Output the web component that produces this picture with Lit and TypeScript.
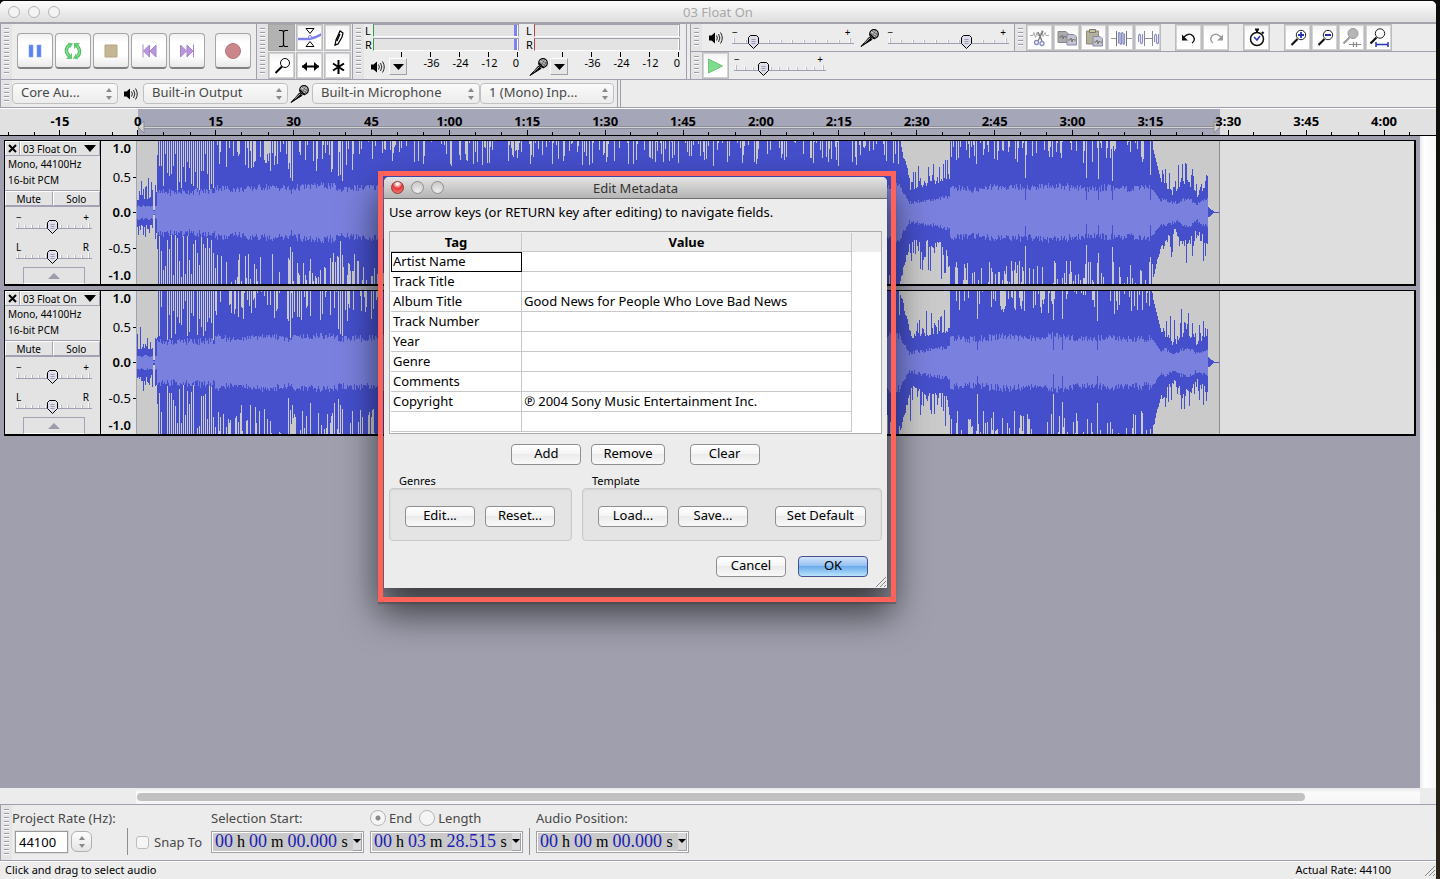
import { LitElement, html, svg, css, nothing } from "lit";
import { customElement, property } from "lit/decorators.js";

const SECONDS_TO_PX = 5.194;

/* ---------- icons ---------- */
const speaker = html`<svg width="14" height="14" viewBox="0 0 14 14" aria-hidden="true">
  <path d="M0 4.500h2.500L6 1.500v11L2.500 9.500H0z" fill="#000"/>
  <path d="M7.500 4.500q1.800 2.500 0 5M9.500 3q2.700 4 0 8M11.500 1.500q3.500 5.500 0 11" fill="none" stroke="#222"/></svg>`;
const mic = html`<svg width="20" height="20" viewBox="0 0 20 20" aria-hidden="true">
  <path d="M1 18.500L9.500 9l2.500 2.500z" fill="#000" stroke="#000"/><path d="M4.500 15l5.500-5" stroke="#bbb"/>
  <circle cx="14" cy="6" r="4.300" fill="#ccc" stroke="#000" stroke-width="1.200"/>
  <path d="M11 5l6 4M12 3l6 4M12 9l4-7M14.500 10l3-6" stroke="#555" stroke-width=".8"/>
  <path d="M10 6l5 5" stroke="#000" stroke-width="1.500"/></svg>`;
const upDown = html`<svg class="arrows" width="8" height="12" viewBox="0 0 8 12" aria-hidden="true"><path d="M4 0l3 4H1zM4 12l3-4H1z" fill="#8a8a8a"/></svg>`;
const grip = html`<span class="grip"></span>`;

const art: Record<string, unknown> = {
  pause: svg`<path d="M12 12h4v12h-4zM20 12h4v12h-4z" fill="#5b82ee" stroke="#86a3f4" stroke-width=".6"/>`,
  loop: svg`<path d="M15.500 11.500q-4.500 2-4 7 .5 3 3 5M20.500 24.500q4.500-2 4-7-.5-3-3-5" fill="none" stroke="#3fae52" stroke-width="3.400"/>
    <path d="M15.500 11.500q-4.500 2-4 7 .5 3 3 5M20.500 24.500q4.500-2 4-7-.5-3-3-5" fill="none" stroke="#7ee08c" stroke-width="1.800"/>
    <path d="M13 9.500l5 1-3 5zM23 26.500l-5-1 3-5zM11 26h6v-6zM25 10h-6v6z" fill="#62ca72"/>`,
  stop: svg`<path d="M12 12h12v12H12z" fill="#c4b594" stroke="#b5a582"/>`,
  prev: svg`<path d="M12 11.500v13M18.500 12v12l-6-6zM25 12v12l-6-6z" fill="#bb94dd" stroke="#a585c8"/>`,
  next: svg`<path d="M24.500 11.500v13M18 12v12l6-6zM11.500 12v12l6-6z" fill="#bb94dd" stroke="#a585c8"/>`,
  record: svg`<circle cx="18" cy="18" r="7.500" fill="#cb868b" stroke="#b5757b"/>`,
};
const tools: Record<string, unknown> = {
  Selection: svg`<path d="M10 5.500h3l1.500 1 1.500-1h3M14.500 6v15M10 21.500h3l1.500-1 1.500 1h3" fill="none" stroke="#000" stroke-width="1.200"/>`,
  Envelope: svg`<path d="M1 14h11q6-1 13-5" fill="none" stroke="#7d83e6" stroke-width="2.500"/><path d="M9 3.500h8l-4 5zM9 21.500h8l-4-5z" fill="#fff" stroke="#000"/><circle cx="13" cy="12" r="1.500" fill="#fff" stroke="#7d83e6"/>`,
  Draw: svg`<path d="M10 20l1-5 4-9 3 2-1 4-4 7zM15 9l-3 7" fill="#fff" stroke="#000" stroke-width="1.200"/><path d="M9.500 21l1-3 1.500 1.200z"/>`,
  Zoom: svg`<circle cx="16" cy="10" r="4.500" fill="#fff" stroke="#000"/><path d="M13 13.500l-6.500 6.500" stroke="#000" stroke-width="2"/>`,
  "Time Shift": svg`<path d="M5 13.500h17" stroke="#000" stroke-width="2"/><path d="M5 13.500l5-4.500v9zM22 13.500l-5-4.500v9z"/>`,
  Multi: svg`<path d="M13.500 7v14M8 10.500l11 7M19 10.500l-11 7" stroke="#000" stroke-width="2"/>`,
  Play: svg`<path d="M5.500 6v14l14-7z" fill="#7fdc8c" stroke="#6ec57b"/>`,
  Cut: svg`<path d="M3 10.500h3l1-3 1.500 5 1.500-5 1 3h2l2-5 1 6 2-4 1 3h3" fill="none" stroke="#aaa"/><path d="M11 16l5-10M15 16l-4-9" stroke="#777" stroke-width="1.300"/><circle cx="9.500" cy="17.500" r="2" fill="none" stroke="#8c8cc0" stroke-width="1.300"/><circle cx="15" cy="18.500" r="2" fill="none" stroke="#8c8cc0" stroke-width="1.300"/>`,
  Copy: svg`<path d="M4 6.500h8l2 2v9H4z" fill="#aaa" stroke="#888"/><path d="M5 12h2l1-2 1 4 1-3 1 1h3" fill="none" stroke="#777"/><path d="M13 9.500h7l2.500 2.500v8H13z" fill="#c4c4cf" stroke="#8888aa"/><path d="M14 15h2l1-2 1 4 1-3 1 1h2" fill="none" stroke="#777"/>`,
  Paste: svg`<path d="M5.500 6h12v13h-12z" fill="#b3b19c" stroke="#8d8b76"/><path d="M8.500 4.500h6v3h-6z" fill="#c8c594" stroke="#777"/><path d="M12 11.500h7l2.500 2.500v7H12z" fill="#c4c4cf" stroke="#8888aa"/><path d="M13 17h2l1-2 1 4 1-3 1 1h2" fill="none" stroke="#777"/>`,
  Trim: svg`<path d="M3 13.500h6M18 13.500h6" stroke="#999"/><path d="M8.500 6v15M18.500 6v15" stroke="#777"/><path d="M10.500 18.500v-10q1-2 1.500 0v10q1 2 1.500 0v-10q1-2 1.500 0v10q1 2 1.500 0v-10" fill="none" stroke="#8b8fc4" stroke-width="1.200"/>`,
  Silence: svg`<path d="M3.500 17v-6q1.500-4 2 0v6q1 4 2 0v-8M19.500 17v-6q1.500-4 2 0v6q1 4 2 0v-8" fill="none" stroke="#8b8fc4" stroke-width="1.200"/><path d="M9.500 6v15M17.500 6v15M10 13.500h7" stroke="#888"/>`,
  Undo: svg`<path d="M8 12q5-5 9-1 3 4-1 7" fill="none" stroke="#111" stroke-width="1.300"/><path d="M6 9.500v6h6z" fill="#111"/>`,
  Redo: svg`<path d="M18 12q-5-5-9-1-3 4 1 7" fill="none" stroke="#999" stroke-width="1.300"/><path d="M20 9.500v6h-6z" fill="#999"/>`,
  "Sync-Lock": svg`<circle cx="13" cy="14" r="6.500" fill="#fff" stroke="#111" stroke-width="1.500"/><path d="M11 4.500h4M13 4v4M18 7l1.500 1.500" stroke="#111" stroke-width="2"/><path d="M10 12l3 3 3-4" fill="none" stroke="#2b35b8" stroke-width="1.500"/>`,
  "Zoom In": svg`<circle cx="16" cy="10" r="4.700" fill="#fff" stroke="#222"/><path d="M12.500 14l-6 6" stroke="#111" stroke-width="2.200"/><path d="M13 10h6M16 7v6" stroke="#2633b5" stroke-width="1.800"/>`,
  "Zoom Out": svg`<circle cx="16" cy="10" r="4.700" fill="#fff" stroke="#222"/><path d="M12.500 14l-6 6" stroke="#111" stroke-width="2.200"/><path d="M13 10h6" stroke="#2633b5" stroke-width="1.800"/>`,
  "Fit Selection": svg`<circle cx="14" cy="8.500" r="5" fill="#b5b5b5" stroke="#999"/><path d="M10.500 12.500l-6 6" stroke="#999" stroke-width="2.200"/><path d="M10 19.500h12M14.500 17v5M17.500 17v5" stroke="#888" stroke-width="1.200"/>`,
  "Fit Project": svg`<circle cx="14" cy="8.500" r="4.700" fill="#fff" stroke="#222"/><path d="M10.500 12.500l-6 6" stroke="#111" stroke-width="2.200"/><path d="M10 19.500h12M10 17v5M22 17v5" stroke="#2633b5" stroke-width="1.500"/>`,
};

/* ---------- waveform ---------- */
const noise = (i: number, seed: number) => {
  const v = Math.sin(i * 12.9898 + seed * 78.233) * 43758.5453;
  return v - Math.floor(v);
};

function waveform(seed: number) {
  const mid = 71;
  let peak = "", rms = "";
  for (let x = 0; x < 1082; x++) {
    const r = (k: number) => noise(x, seed + k);
    const swell = Math.sin(x / 9) * 2 + Math.sin(x / 23) * 2;
    let up = 72, down = 72, body = 24 + swell / 2 + r(3) * 7 - 3;
    const dip = (chance: number, low: number, high: number) => {
      if (r(1) < chance) up = low + r(4) * (high - low);
      if (r(2) < chance) down = low + r(5) * (high - low);
    };
    if (x < 16) { up = 12 + r(1) * r(6) * 26; down = 12 + r(2) * r(7) * 26; body = 5 + r(3) * 2; }
    else if (x < 18) { up = 2; down = 2; body = 1; }
    else if (x < 20) { up = 12 + r(1) * 16; down = up; body = 6; }
    else if (x < 78) {
      body = 15 + r(3) * 7 + x / 30;
      if (x % 2 === 0 && r(1) < 0.92) { up = 22 + r(4) * r(4) * 40; down = 22 + r(5) * r(5) * 44; }
    }
    else if (x < 763) {
      if (x < 240) dip(0.4, 40, 72);
      else dip(0.36, 46, 72);
      if ((x > 150 && x < 156) || (x > 199 && x < 207)) { if (x % 2) { up = 24 + r(4) * 20; down = 28 + r(5) * 20; } body -= 6 * r(8); }
    }
    else if (x < 773) { const k = x - 763; up = 72 - k * 4 - r(1) * 6; down = 72 - k * 4 - r(2) * 6; body = 26 - k * 1.800 - r(3) * 3; }
    else if (x < 813) {
      const g = (x - 773) / 40;
      up = 22 + g * 8 + r(1) * r(6) * 38; down = 22 + g * 10 + r(2) * r(7) * 40; body = 7 + g * 6 + r(3) * 4;
    }
    else if (x < 1016) {
      dip(0.36, 48, 72);
      if (r(8) > 0.97) { up = 30 + r(4) * 15; down = 30 + r(5) * 15; body = 12; }
    }
    else if (x < 1025) { const k = x - 1016; up = 62 - k * 4; down = up + r(2) * 4; body = 22 - k * 1.500; }
    else if (x < 1071) {
      const b = Math.abs(Math.sin((x - 1013) / 7.500)) * 12;
      up = 14 + b + r(1) * r(6) * 32; down = 14 + b + r(2) * r(7) * 32; body = 6 + b / 2.500 + r(3) * 4;
    }
    else { up = Math.max(0.5, (1077 - x) * 0.800); down = up; body = 0; }
    peak += `M${x}.5 ${Math.round(mid - up)}V${Math.round(mid + down + 0.5)}`;
    if (body > 0) rms += `M${x}.5 ${Math.round(mid - body)}V${Math.round(mid + body + r(9) * 2)}`;
  }
  return { peak, rms };
}

const base = css`
  * { box-sizing: border-box; }
  button, input, select { font: inherit; color: inherit; margin: 0; padding: 0; }
  svg { display: block; flex: none; }
`;

@customElement("audio-slider")
class AudioSlider extends LitElement {
  @property() low = "−";
  @property() high = "+";
  @property() label = "";
  @property({ type: Number }) value = 50;
  @property({ type: Number }) steps = 10;
  static styles = [base, css`
    :host { display: block; height: 21px; }
    .ends { display: flex; justify-content: space-between; padding-right: 3px; height: 7px; font-size: 10px; line-height: 8px; color: #000; }
    .body { display: grid; height: 14px; }
    .body > * { grid-area: 1 / 1; }
    .rail { height: 9px; border-bottom: 1px solid #9f9fb4; display: flex; align-items: flex-end; justify-content: space-between; padding: 0 2px 0 1px; }
    .rail i { width: 2px; height: 3px; border-left: 1px solid #fff; border-right: 1px solid #b9b9c8; }
    .rail i:first-child, .rail i:last-child { height: 5px; }
    input { appearance: none; width: 100%; height: 14px; background: none; outline: none; }
    input::-webkit-slider-thumb { appearance: none; width: 12px; height: 14px; border: 0;
      background: url("data:image/svg+xml,%3Csvg xmlns='http://www.w3.org/2000/svg' width='12' height='14'%3E%3Cpath d='M2.500 .5h6l2 2v6l-5 5-5-5v-6z' fill='%23dedeea' stroke='%23000'/%3E%3Cpath d='M3.500 4.500h4M3.500 6.500h4M3.500 8.500h4' stroke='%239c9cb4'/%3E%3C/svg%3E"); }
  `];
  render() {
    return html`<div class="ends"><span>${this.low}</span><span>${this.high}</span></div>
      <div class="body"><div class="rail">${Array.from({ length: this.steps + 1 }, () => html`<i></i>`)}</div>
      <input type="range" min="0" max="100" .value=${String(this.value)} aria-label=${this.label}></div>`;
  }
}

@customElement("audio-track")
class AudioTrack extends LitElement {
  @property({ type: Number }) seed = 1;
  @property({ type: Number }) duration = 208.515;
  static styles = [base, css`
    :host { display: flex; height: 146px; border: 1px solid #000; border-width: 1px 2px 2px 1px; background: #dedede; color: #000; }
    .panel { width: 96px; flex: none; background: #e3e3e3; border-right: 1px solid #000; font-size: 10px; line-height: 16px; display: flex; flex-direction: column; }
    .head { display: flex; height: 15px; border-bottom: 1px solid #a2a2b4; }
    button { border: 1px solid #fff; border-right-color: #a2a2b4; border-bottom-color: #a2a2b4; background: #e3e3e3; white-space: nowrap; }
    .head button { border-bottom: 0; line-height: 12px; display: flex; align-items: center; }
    .close { width: 15px; justify-content: center; }
    .name { flex: 1; justify-content: space-between; padding: 0 3px 0 2px; }
    .info { padding: 0 3px; height: 34px; }
    .toggles { display: flex; height: 17px; border-top: 1px solid #a2a2b4; border-bottom: 1px solid #a2a2b4; }
    .toggles button { flex: 1; line-height: 12px; }
    .sliders { padding: 6px 8px 0 11px; display: grid; gap: 9px; }
    .fold { width: 62px; height: 17px; flex: none; margin: 3px 0 0 18px; border-color: #a2a2b4 #a2a2b4 #fff; display: grid; place-items: center; }
    .scale { width: 36px; flex: none; background: #e3e3e3; border-right: 1px solid #a2a2b4; display: grid; grid-template-rows: 14px 44px 26px 46px 8px; align-items: center; font-size: 13px; line-height: 14px; }
    .scale span { display: flex; justify-content: flex-end; align-items: center; gap: 2px; }
    .scale span::after { content: ""; width: 3px; height: 1px; background: #000; }
    .scale span:first-child::after, .scale span:last-child::after { background: none; }
    .bold { font-weight: 600; }
    .clip { background: #cacaca; border-right: 1px solid #8c8c8c; overflow: hidden; flex: none; }
    .lane { flex: 1; overflow: hidden; display: flex; }
  `];
  render() {
    const w = waveform(this.seed);
    return html`
      <div class="panel">
        <div class="head">
          <button class="close" aria-label="Close track"><svg width="9" height="9" viewBox="0 0 9 9"><path d="M1 1l7 7M8 1l-7 7" stroke="#000" stroke-width="2"/></svg></button>
          <button class="name">03 Float On <svg width="12" height="7" viewBox="0 0 12 7"><path d="M0 0h12L6 7z"/></svg></button>
        </div>
        <div class="info">Mono, 44100Hz<br>16-bit PCM</div>
        <div class="toggles"><button>Mute</button><button>Solo</button></div>
        <div class="sliders">
          <audio-slider label="Gain" .value=${48}></audio-slider>
          <audio-slider label="Pan" low="L" high="R" .value=${48}></audio-slider>
        </div>
        <button class="fold" aria-label="Collapse"><svg width="12" height="6" viewBox="0 0 12 6"><path d="M6 0l6 6H0z" fill="#9c9cae"/></svg></button>
      </div>
      <div class="scale"><span class="bold">1.0</span><span>0.5</span><span class="bold">0.0</span><span>-0.5</span><span class="bold">-1.0</span></div>
      <div class="lane"><div class="clip" style="width:${Math.round(this.duration * SECONDS_TO_PX)}px">
        <svg width="1083" height="143" viewBox="0 0 1083 143" shape-rendering="crispEdges">
          <path d=${w.peak} stroke="#454fcb"/><path d=${w.rms} stroke="#7a80dd"/>
        </svg></div></div>`;
  }
}

@customElement("metadata-dialog")
class MetadataDialog extends LitElement {
  rows = [["Artist Name", ""], ["Track Title", ""], ["Album Title", "Good News for People Who Love Bad News"], ["Track Number", ""], ["Year", ""],
    ["Genre", ""], ["Comments", ""], ["Copyright", "℗ 2004 Sony Music Entertainment Inc."], ["", ""]];
  static styles = [base, css`
    :host { display: block; width: 503px; background: #ececec; color: #000; border-radius: 5px 5px 0 0; box-shadow: 0 0 1px #333, 0 20px 36px 6px rgba(0,0,0,.62); font-size: 13px; line-height: 18px; }
    header { display: grid; grid-template-columns: 60px 1fr 67px; align-items: center; height: 22px; padding-left: 7px; border-bottom: 1px solid #6e6e6e; border-radius: 5px 5px 0 0; background: linear-gradient(#e4e4e4, #b4b4b4); color: #333; text-align: center; }
    h1 { font-size: 13px; line-height: 20px; font-weight: 400; margin: 0; }
    .lights { display: flex; gap: 7px; }
    .lights button { width: 13px; height: 13px; border-radius: 50%; border: 1px solid #8f8f8f; background: radial-gradient(circle at 50% 85%, #eee, #c4c4c4); }
    .lights .red { border-color: #9c3232; background: radial-gradient(circle at 50% 15%, #fff 8%, #e2383a 45%, #f58a84); }
    .main { padding: 4px 5px 11px; }
    p { margin: 0 0 10px; line-height: 18px; }
    .grid { border: 1px solid #adadad; height: 203px; padding: 1px; background: linear-gradient(#ececec 20px, #fff 20px); }
    table { border-collapse: separate; border-spacing: 0; table-layout: fixed; width: 461px; }
    col.tag { width: 131px; }
    th { height: 19px; padding: 0; border: 1px solid #c8c8c8; border-width: 0 1px 1px 0; background: #ececec; line-height: 18px; }
    td { height: 20px; padding: 0 2px 2px; border: 1px solid #c8c8c8; border-width: 0 1px 1px 0; line-height: 16px; background: #fff; white-space: nowrap; }
    td.current { outline: 1px solid #000; outline-offset: -1px; }
    .actions { display: flex; }
    button.push { min-width: 70px; height: 21px; padding: 0 11px 2px; border: 1px solid #8f8f8f; border-radius: 4px; background: linear-gradient(#fff, #f4f4f4 50%, #ebebeb 50%, #f9f9f9); line-height: 17px; white-space: nowrap; }
    .rowbuttons { justify-content: center; gap: 10px; padding-top: 10px; }
    .wide { margin-left: 15px; }
    .groups { display: flex; gap: 10px; padding-top: 9px; }
    fieldset { border: 0; margin: 0; padding: 0; min-width: 0; width: 183px; }
    fieldset.fill { width: auto; flex: 1; }
    legend { font-size: 11px; line-height: 14px; padding: 0 10px; }
    .box { display: flex; gap: 10px; height: 53px; padding: 17px 15px; border: 1px solid #cacaca; border-radius: 4px; background: #e4e4e4; box-shadow: inset 0 1px 2px rgba(0,0,0,.08); }
    .end { margin-left: auto; }
    .footer { justify-content: flex-end; gap: 12px; padding: 15px 14px 0 0; }
    button.primary { border-color: #46508f; background: linear-gradient(#d3e4f8, #8fbdf0 50%, #6cabec 50%, #b9e4fb); }
    .foot { display: grid; }
    .corner { place-self: end; width: 12px; height: 12px; }
    .foot > * { grid-area: 1 / 1; }
  `];
  render() {
    return html`
      <header><div class="lights"><button class="red" aria-label="Close"></button><button aria-label="Minimize"></button><button aria-label="Zoom"></button></div><h1>Edit Metadata</h1></header>
      <div class="foot"><div class="main">
        <p>Use arrow keys (or RETURN key after editing) to navigate fields.</p>
        <div class="grid"><table>
          <colgroup><col class="tag"><col></colgroup>
          <thead><tr><th>Tag</th><th>Value</th></tr></thead>
          <tbody>${this.rows.map(([t, v], i) => html`<tr><td class=${i === 0 ? "current" : nothing}>${t}</td><td>${v}</td></tr>`)}</tbody>
        </table></div>
        <div class="actions rowbuttons"><button class="push">Add</button><button class="push">Remove</button><button class="push wide">Clear</button></div>
        <div class="groups">
          <fieldset><legend>Genres</legend><div class="box"><button class="push">Edit...</button><button class="push">Reset...</button></div></fieldset>
          <fieldset class="fill"><legend>Template</legend><div class="box"><button class="push">Load...</button><button class="push">Save...</button><button class="push end">Set Default</button></div></fieldset>
        </div>
        <div class="actions footer"><button class="push">Cancel</button><button class="push primary">OK</button></div>
      </div>
      <svg class="corner" viewBox="0 0 12 12"><path d="M1 11L11 1M5 11l6-6M9 11l2-2" stroke="#888"/></svg></div>`;
  }
}

@customElement("app-root")
class AppRoot extends LitElement {
  static styles = [base, css`
    :host { display: block; height: 100vh; background: linear-gradient(#0a0c0a, #14160f 40%, #2a241a); padding: 1px 4px 0 0; font: 13px/18px "Noto Sans", "Open Sans", sans-serif; color: #000; overflow: hidden; position: relative; box-sizing: border-box; }
    .window { display: flex; flex-direction: column; height: 100%; background: #ececec; border-radius: 5px 5px 0 0; overflow: hidden; }
    .titlebar { display: grid; grid-template-columns: 120px 1fr 128px; align-items: center; height: 23px; flex: none; padding-left: 8px; border-bottom: 2px solid #a3a3ac; background: linear-gradient(#fcfcfc, #dedede); text-align: center; color: #a8a8a8; }
    h1 { margin: 0; font-size: 13px; line-height: 20px; font-weight: 400; }
    .lights { display: flex; gap: 8px; }
    .lights button { width: 12px; height: 12px; border: 1px solid #b4b4b4; border-radius: 50%; background: #f4f4f4; }
    .grip { width: 11px; flex: none; align-self: stretch; background: #e4e4e4; padding: 4px 3px 3px; display: block; }
    .grip::before { content: ""; display: block; height: 100%; background: repeating-linear-gradient(#9b9bb0 0 1px, #fff 1px 2px, transparent 2px 4px); width: 5px; }
    .bars { display: flex; height: 56px; flex: none; border-bottom: 1px solid #9f9fae; }
    .dock { display: flex; border-right: 1px solid #9f9fae; flex: none; }
    .transport { padding-right: 5px; border-left: 1px solid #9f9fae; }
    .transport .keys { display: flex; gap: 2px; padding: 9px 0 0 5px; }
    .key { width: 36px; height: 36px; border: 1px solid #a6a6a6; border-bottom: 2px solid #808080; border-radius: 4px; background: linear-gradient(#f0f0f0, #fff 25%, #fff 65%, #e8e8e8); display: grid; place-items: center; }
    .key.rec { margin-left: 8px; }
    .toolgrid { display: grid; grid-template-columns: repeat(3, 27px); grid-auto-rows: 27px; gap: 1px; padding-right: 1px; }
    .tool { width: 27px; height: 27px; border: 1px solid #bcbcc0; outline: 1px solid #d4d4d4; outline-offset: -2px; background: linear-gradient(#f2f2f2, #fff 40%, #fff); display: grid; place-items: center; overflow: hidden; }
    .tool.on { background: #b2b2b2; border-color: #a6a6a6; outline: none; }
    .meter { width: 161px; font-size: 11px; }
    .channel { display: flex; height: 13px; line-height: 14px; margin-bottom: 1px; padding-left: 1px; }
    .channel span { width: 8px; flex: none; }
    .vu { width: 146px; background: #e3e3e3; border-top: 1px solid #9f9fae; border-bottom: 1px solid #fff; border-left: 1px solid #2f9f45; border-right: 1px solid #9f9fae; display: flex; justify-content: flex-end; }
    .vu.in { border-left-color: #b64242; }
    .vu i { width: 4px; background: #7e80f5; border-right: 1px solid #fff; }
    .vu.in i { background: none; }
    .ticks { height: 5px; margin-left: 9px; width: 146px; background: repeating-linear-gradient(90deg, transparent 0 28px, #000 28px 29px); }
    .under { display: flex; height: 20px; }
    .under .ico { width: 25px; padding-left: 3px; height: 19px; display: grid; place-items: center; }
    .drop { width: 18px; height: 17px; margin-top: 1px; border: 1px solid #fff; border-right-color: #9f9fae; border-bottom-color: #9f9fae; background: #e6e6e6; display: grid; place-items: center; }
    .db { display: grid; grid-template-columns: 29px 29px 29px 15px; margin-left: 10px; text-align: center; line-height: 12px; font-size: 11px; align-content: start; }
    .db span:last-child { text-align: right; }
    .right { flex: 1; min-width: 0; margin-left: 3px; border-left: 1px solid #9f9fae; }
    .line { display: flex; height: 27px; }
    .line.first { height: 28px; border-bottom: 1px solid #9f9fae; }
    .mixer { align-items: center; padding-right: 5px; width: 324px; }
    .mixer audio-slider { width: 122px; margin-top: 1px; }
    .mixer .a { margin: 0 9px 0 7px; }
    .mixer .b { margin: 0 8px 0 6px; }
    .edit { display: flex; gap: 14px; }
    .set { display: flex; }
    .line audio-slider.speed { width: 92px; margin: 3px 0 0 5px; }
    .devices { display: flex; align-items: center; height: 28px; flex: none; border-bottom: 1px solid #9f9fae; border-left: 1px solid #9f9fae; }
    .pick { display: grid; align-items: center; height: 21px; }
    .pick > * { grid-area: 1 / 1; }
    .pick select { appearance: none; width: 100%; height: 21px; border: 1px solid #c0c0c0; border-radius: 4px; background: linear-gradient(#fafafa, #ececec); color: #484848; padding: 0 18px 2px 8px; line-height: 17px; }
    .pick .arrows { justify-self: end; margin-right: 5px; }
    .core { width: 106px; } .out { width: 145px; } .inp { width: 168px; } .chan { width: 134px; }
    .gap1 { margin: 0 5px 0 6px; } .gap2 { margin: 0 2px; }
    .stop { align-self: stretch; width: 4px; margin-left: 3px; border: 1px solid #9f9fae; border-width: 0 1px; }
    .ruler { height: 28px; flex: none; background: #e1e1e1; border-top: 1px solid #fff; border-bottom: 1px solid #000; display: grid; }
    .ruler > * { grid-area: 1 / 1; }
    .span { width: 1082px; margin-left: 138px; background: linear-gradient(transparent 17px, #8e8e9a 17px 18px, #d4d4d4 18px 19px, #8e8e9a 19px 20px, transparent 20px) #a6a6b9; display: flex; justify-content: space-between; padding-top: 12px; }
    .marks { display: flex; padding: 0 13px 0 21px; min-width: 0; z-index: 1; background: linear-gradient(#000, #000) 8px 100% / 1px 3px no-repeat; }
    .marks span { flex: 1; text-align: center; font-weight: 700; line-height: 24px; white-space: nowrap;
      background: linear-gradient(#000, #000) 50% 100% / 1px 5px no-repeat, linear-gradient(#000, #000) 16.700% 100% / 1px 3px no-repeat, linear-gradient(#000, #000) 83.300% 100% / 1px 3px no-repeat; }
    .tracks { flex: 1; min-height: 0; display: flex; background: #9f9fae; }
    .list { flex: 1; min-width: 0; padding: 4px; display: flex; flex-direction: column; gap: 4px; }
    .vscroll { width: 16px; background: linear-gradient(90deg, #ececf0, #fff 30%, #f6f6f6); }
    .hscroll { height: 16px; flex: none; margin: 0 16px 0 136px; padding: 5px 115px 3px 1px; background: linear-gradient(#e8e8ec, #fbfbfb 30%, #f6f6f6); }
    .hscroll div { height: 8px; border-radius: 4px; background: #c1c1c1; }
    .selection { display: flex; height: 57px; flex: none; border: 1px solid #9f9fae; border-width: 1px 0 1px 1px; color: #484848; }
    .col { display: flex; flex-direction: column; padding-top: 4px; white-space: nowrap; }
    .top { height: 18px; line-height: 18px; margin-bottom: 4px; display: flex; align-items: center; }
    .rate { width: 115px; }
    .ratebox { display: flex; gap: 3px; padding-left: 3px; }
    .ratebox input { width: 53px; height: 22px; border: 1px solid #9a9a9a; background: #fff; color: #000; padding: 0 3px 1px; outline: 1px solid #ddd; }
    .spin { width: 21px; height: 21px; border: 1px solid #b0b0b0; border-radius: 6px; background: linear-gradient(#fdfdfd, #e4e4e4); display: grid; place-items: center; }
    .rule { width: 1px; height: 27px; margin-top: 23px; background: #8e8e8e; }
    .snap { display: flex; align-items: center; gap: 5px; margin: 28px 9px 0 8px; height: 18px; }
    input[type=checkbox] { appearance: none; width: 13px; height: 13px; border: 1px solid #bdbdbd; border-radius: 3px; background: #f5f5f5; }
    input[type=radio] { appearance: none; width: 16px; height: 16px; border: 1px solid #b4b4b4; border-radius: 50%; background: #f5f5f5; margin-right: 3px; }
    input[type=radio]:checked { background: radial-gradient(circle, #8a8a8a 2px, #f5f5f5 3px); }
    .top label { display: flex; align-items: center; margin-right: 7px; }
    .time { display: flex; align-items: center; width: 153px; height: 22px; border: 1px solid #a2a2a8; outline: 1px solid #fff; outline-offset: -2px; background: #c9c9c9; padding: 0 0 1px 3px; font: 16px/18px "Liberation Serif", serif; color: #000; gap: 4px; }
    .time input { width: 18px; border: 0; background: none; color: #1c1cb4; font-size: 18px; height: 18px; outline: none; }
    .time input.sec { width: 50px; }
    .time button { width: 9px; height: 18px; margin-left: auto; margin-right: 1px; background: #d8d8d8; border: 0; border-right: 1px solid #9f9fae; border-bottom: 1px solid #9f9fae; display: grid; place-items: center; }
    .time span:last-of-type { margin-right: -4px; }
    .sp { margin-right: 6px; }
    .sp2 { margin-left: 6px; }
    .status { flex: none; display: flex; justify-content: space-between; align-items: center; border-top: 1px solid #fff; padding: 0 0 2px 5px; font-size: 11px; line-height: 15px; height: 18px; }
    .status .rt { display: flex; align-items: flex-end; gap: 33px; }
    .overlay { position: absolute; left: 378px; top: 171px; padding: 6px 9px 14px 6px; }
    .overlay::after { content: ""; position: absolute; inset: 0; border: 5px solid #ff6259; pointer-events: none; box-shadow: 0 2px 1px rgba(70,60,70,.4); }
  `];

  key(name: string, label: string, extra = "") {
    return html`<button class="key ${extra}" aria-label=${label}><svg width="36" height="36" viewBox="1 1 36 36">${art[name]}</svg></button>`;
  }
  tool(name: string, on = false) {
    return html`<button class="tool ${on ? "on" : ""}" aria-label=${name}><svg width="27" height="27" viewBox="0 0 27 27">${tools[name]}</svg></button>`;
  }
  meter(input: boolean) {
    return html`<div class="meter">
      ${["L", "R"].map(c => html`<div class="channel"><span>${c}</span><div class="vu ${input ? "in" : ""}"><i></i></div></div>`)}
      <div class="ticks"></div>
      <div class="under"><div class="ico">${input ? mic : speaker}</div>
        <button class="drop" aria-label="Meter menu"><svg width="11" height="6" viewBox="0 0 11 6"><path d="M0 0h11L5.500 6z"/></svg></button>
        <div class="db"><span>-36</span><span>-24</span><span>-12</span><span>0</span></div></div>
    </div>`;
  }
  pick(cls: string, label: string, text: string) {
    return html`<div class="pick ${cls}"><select aria-label=${label}><option>${text}</option></select>${upDown}</div>`;
  }
  time(label: string, h: string, m: string, s: string) {
    return html`<div class="time" role="group" aria-label=${label}>
      <input aria-label="Hours" .value=${h}><span>h</span><input aria-label="Minutes" .value=${m}><span>m</span><input class="sec" aria-label="Seconds" .value=${s}><span>s</span>
      <button aria-label="Format"><svg width="8" height="4" viewBox="0 0 8 4"><path d="M0 0h8L4 4z"/></svg></button></div>`;
  }
  render() {
    const marks = ["-15", "0", "15", "30", "45", "1:00", "1:15", "1:30", "1:45", "2:00", "2:15", "2:30", "2:45", "3:00", "3:15", "3:30", "3:45", "4:00"];
    return html`
      <div class="window">
        <div class="titlebar"><div class="lights"><button aria-label="Close"></button><button aria-label="Minimize"></button><button aria-label="Zoom"></button></div><h1>03 Float On</h1></div>
        <div class="bars">
          <div class="dock transport">${grip}<div class="keys">
            ${this.key("pause", "Pause")}${this.key("loop", "Play looped")}${this.key("stop", "Stop")}${this.key("prev", "Skip to start")}${this.key("next", "Skip to end")}${this.key("record", "Record", "rec")}</div></div>
          <div class="dock">${grip}<div class="toolgrid">${this.tool("Selection", true)}${["Envelope", "Draw", "Zoom", "Time Shift", "Multi"].map(t => this.tool(t))}</div></div>
          <div class="dock">${grip}${this.meter(false)}${this.meter(true)}</div>
          <div class="right">
            <div class="line first">
              <div class="dock mixer">${grip}<span class="a">${speaker}</span><audio-slider label="Output volume" .value=${15}></audio-slider><span class="b">${mic}</span><audio-slider label="Input volume" .value=${67}></audio-slider></div>
              ${grip}
              <div class="edit">
                <div class="set">${["Cut", "Copy", "Paste", "Trim", "Silence"].map(t => this.tool(t))}</div>
                <div class="set">${["Undo", "Redo"].map(t => this.tool(t))}</div>
                <div class="set">${this.tool("Sync-Lock")}</div>
                <div class="set">${["Zoom In", "Zoom Out", "Fit Selection", "Fit Project"].map(t => this.tool(t))}</div>
              </div>
            </div>
            <div class="line">${grip}${this.tool("Play")}<audio-slider class="speed" label="Playback speed" .value=${30}></audio-slider></div>
          </div>
        </div>
        <div class="devices">${grip}
          ${this.pick("core", "Audio host", "Core Au...")}<span class="gap1">${speaker}</span>
          ${this.pick("out", "Output device", "Built-in Output")}<span class="gap2">${mic}</span>
          ${this.pick("inp", "Input device", "Built-in Microphone")}${this.pick("chan", "Input channels", "1 (Mono) Inp...")}
          <span class="stop"></span>
        </div>
        <div class="ruler">
          <div class="span">
            <svg width="8" height="12" viewBox="0 0 8 12"><path d="M0 6l6-6v12z" fill="#d2d2d2" stroke="#8e8e8e"/></svg>
            <svg width="8" height="12" viewBox="0 0 8 12"><path d="M8 6L2 0v12z" fill="#d2d2d2" stroke="#8e8e8e"/></svg>
          </div>
          <div class="marks">${marks.map(m => html`<span>${m}</span>`)}</div>
        </div>
        <div class="tracks">
          <div class="list"><audio-track .seed=${1}></audio-track><audio-track .seed=${31}></audio-track></div>
          <div class="vscroll"></div>
        </div>
        <div class="hscroll"><div></div></div>
        <div class="selection">${grip}
          <div class="col rate"><label class="top" for="rate">Project Rate (Hz):</label><div class="ratebox"><input id="rate" .value=${"44100"}><button class="spin" aria-label="Choose rate">${upDown}</button></div></div>
          <span class="rule"></span>
          <label class="snap"><input type="checkbox">Snap To</label>
          <div class="col sp"><div class="top">Selection Start:</div>${this.time("Selection Start", "00", "00", "00.000")}</div>
          <div class="col sp"><div class="top"><label><input type="radio" name="mode" checked>End</label><label><input type="radio" name="mode">Length</label></div>${this.time("Selection End", "00", "03", "28.515")}</div>
          <span class="rule"></span>
          <div class="col sp2"><div class="top">Audio Position:</div>${this.time("Audio Position", "00", "00", "00.000")}</div>
        </div>
        <div class="status"><span>Click and drag to select audio</span><span class="rt">Actual Rate: 44100<svg width="12" height="12" viewBox="0 0 12 12"><path d="M1 11L11 1M5 11l6-6M9 11l2-2" stroke="#888"/></svg></span></div>
      </div>
      <div class="overlay"><metadata-dialog role="dialog" aria-label="Edit Metadata"></metadata-dialog></div>`;
  }
}
